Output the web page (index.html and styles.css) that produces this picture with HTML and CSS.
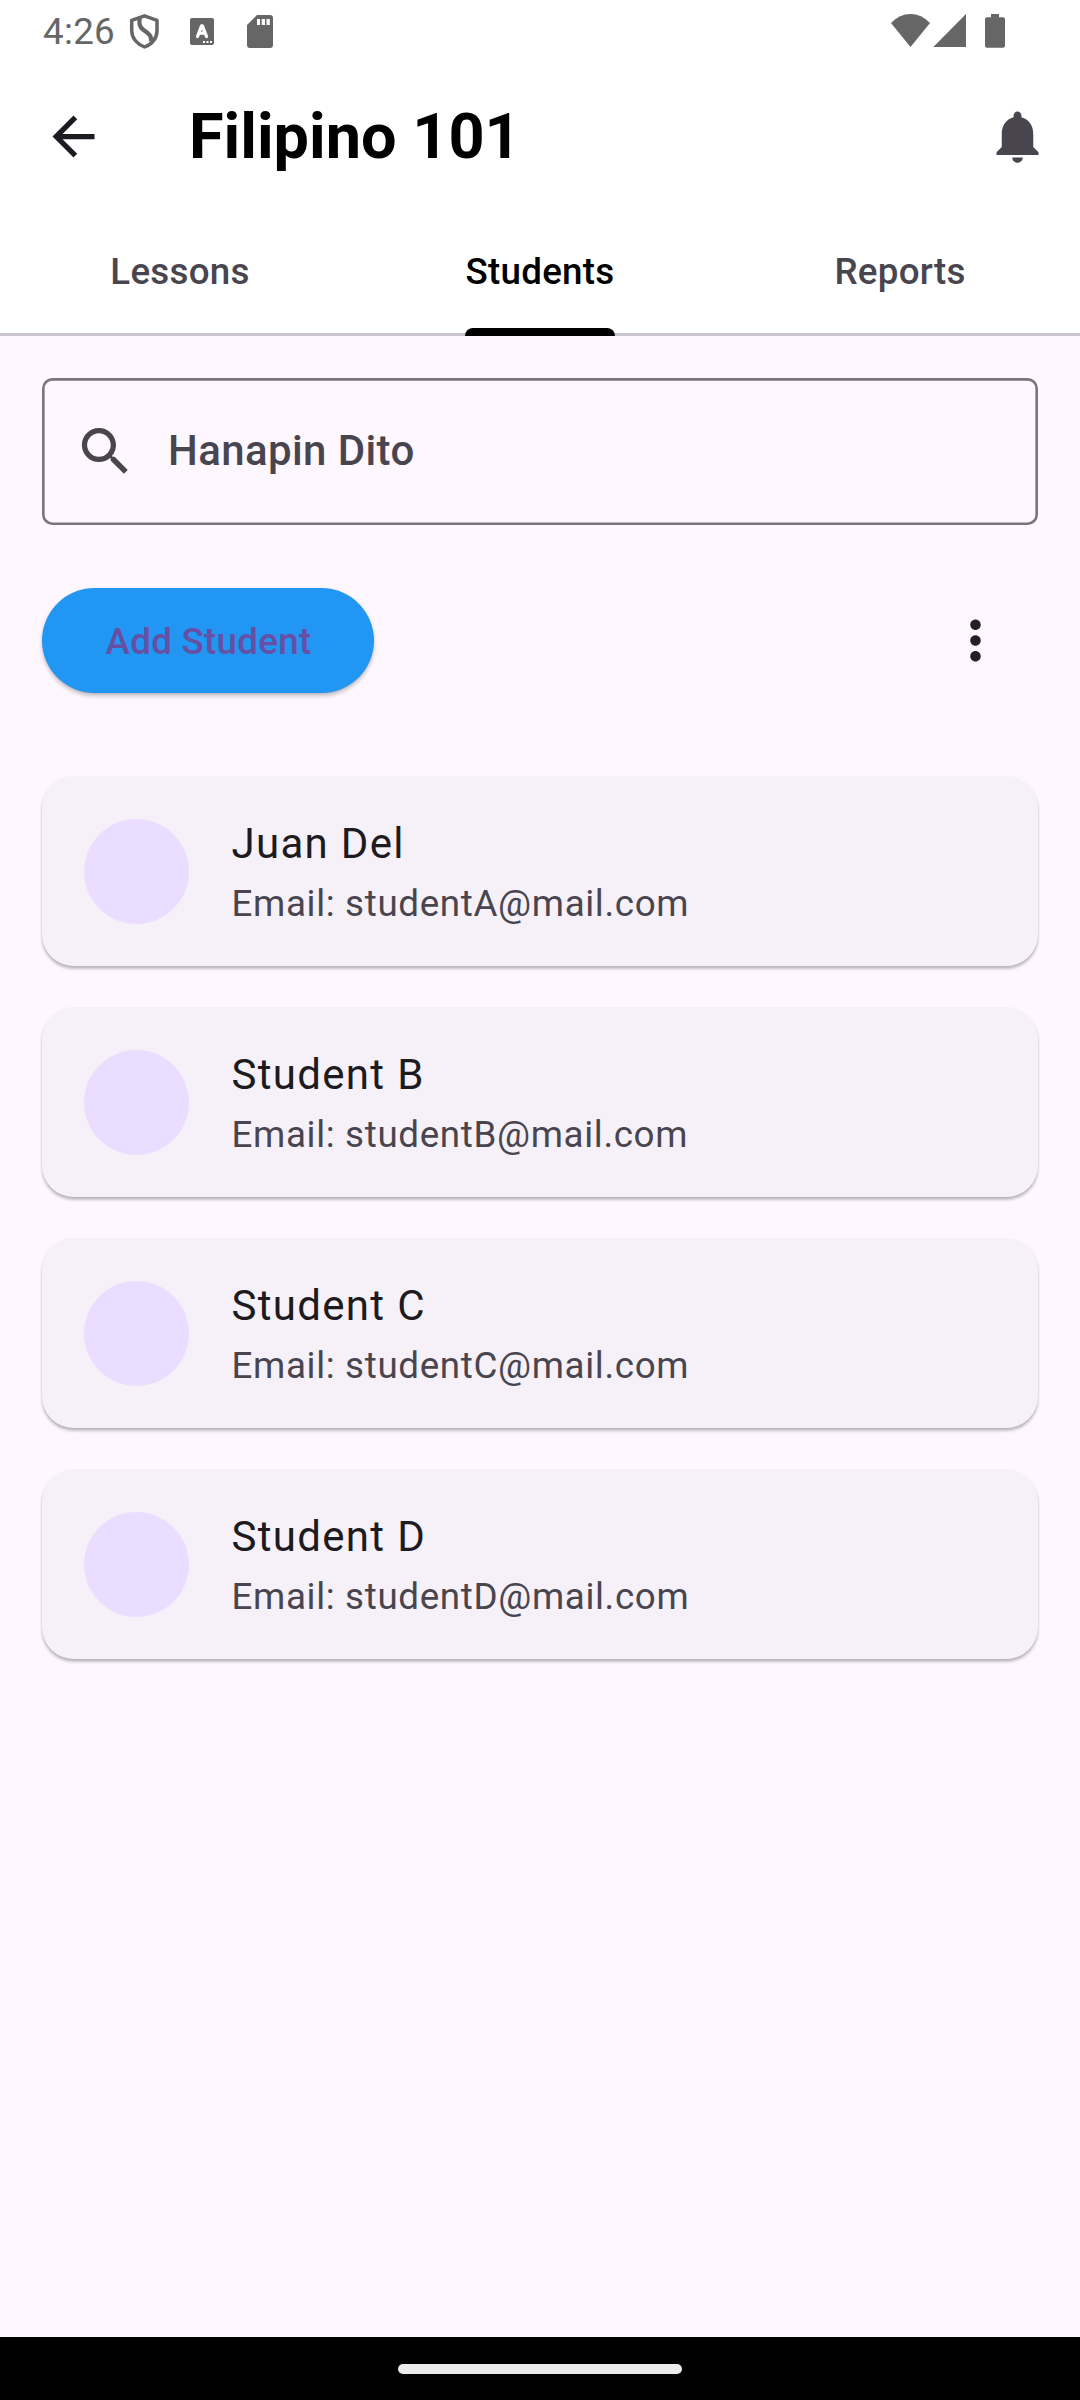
FILE: index.html
```html
<!DOCTYPE html>
<html lang="fil">
<head>
<meta charset="utf-8">
<title>Filipino 101</title>
<link rel="stylesheet" href="styles.css">
</head>
<body>
<div class="screen">
  <div class="status-bar">
    <span class="clock">4:26</span>
    <svg class="status-left" width="150" height="63" viewBox="125 0 150 63" fill="#666">
      <path d="M144.500 15.800L157 20.300V30.500C157 38 152 44 144.500 47C137 44 131.700 38 131.700 30.500V20.300Z" fill="none" stroke="#666" stroke-width="3.500" stroke-linejoin="round"/>
      <path d="M140 17.500C138.500 23 139 26.500 143 29.500C148 33 152 35.500 151 41.500" fill="none" stroke="#666" stroke-width="4.200"/>
      <path fill-rule="evenodd" d="M192 18h20a2 2 0 0 1 2 2v23a2 2 0 0 1-2 2h-20a2 2 0 0 1-2-2v-23a2 2 0 0 1 2-2zM203 41v2h2v-2zM206.500 41v2h2v-2zM210 41v2h2v-2z"/>
      <path d="M197.500 36.500L201.500 26H202.500L206.500 36.500M199.300 33.200H204.700" fill="none" stroke="#fff" stroke-width="3.300" stroke-linecap="round" stroke-linejoin="round"/>
      <path fill-rule="evenodd" d="M257 15h13a3 3 0 0 1 3 3v27a3 3 0 0 1-3 3h-20a3 3 0 0 1-3-3v-20zM257 19v6h3v-6zM261.700 19v6h3.300v-6zM266.500 19v6h3.300v-6z"/>
    </svg>
    <svg class="status-right" width="120" height="63" viewBox="885 0 120 63" fill="#666">
      <path d="M891 23Q899.500 14 910.500 14T930 23L910.500 47Z"/>
      <path d="M966 14V47H933.300Z"/>
      <path d="M991 14h8v3.300h4a2 2 0 0 1 2 2v26.500a2 2 0 0 1-2 2h-16a2 2 0 0 1-2-2v-26.500a2 2 0 0 1 2-2h4z"/>
    </svg>
  </div>
  <header class="app-bar">
    <svg class="icon" viewBox="0 0 24 24" fill="#1d1b20"><path d="M20 11H7.830l5.590-5.590L12 4l-8 8 8 8 1.410-1.410L7.830 13H20v-2z"/></svg>
    <h1 class="title">Filipino 101</h1>
    <svg class="icon" viewBox="0 0 24 24" fill="#49454f"><path d="M12 22c1.100 0 2-.9 2-2h-4c0 1.100.89 2 2 2zm6-6v-5c0-3.070-1.640-5.640-4.500-6.320V4c0-.83-.67-1.500-1.500-1.500s-1.500.67-1.500 1.500v.68C7.630 5.360 6 7.920 6 11v5l-2 2v1h16v-1l-2-2z"/></svg>
  </header>
  <nav class="tabs">
    <div class="tab"><span class="tab-label">Lessons</span></div>
    <div class="tab active"><span class="tab-label">Students</span></div>
    <div class="tab"><span class="tab-label">Reports</span></div>
  </nav>
  <main class="content">
    <div class="search">
      <svg class="icon" viewBox="0 0 24 24" fill="#49454f"><path d="M15.500 14h-.79l-.28-.27C15.410 12.590 16 11.110 16 9.500 16 5.910 13.090 3 9.500 3S3 5.910 3 9.500 5.910 16 9.500 16c1.610 0 3.090-.59 4.230-1.570l.27.28v.79l5 4.990L20.490 19l-4.990-5zm-6 0C7.010 14 5 11.990 5 9.500S7.010 5 9.500 5 14 7.010 14 9.500 11.990 14 9.500 14z"/></svg>
      <span class="search-label">Hanapin Dito</span>
    </div>
    <div class="actions">
      <button class="add">Add Student</button>
      <svg class="icon" viewBox="0 0 24 24" fill="#212121"><path d="M12 8c1.100 0 2-.9 2-2s-.9-2-2-2-2 .9-2 2 .9 2 2 2zm0 2c-1.100 0-2 .9-2 2s.9 2 2 2 2-.9 2-2-.9-2-2-2zm0 6c-1.100 0-2 .9-2 2s.9 2 2 2 2-.9 2-2-.9-2-2-2z"/></svg>
    </div>
    <ul class="students">
      <li class="card"><span class="avatar"></span><div><div class="name">Juan Del</div><div class="email">Email: studentA@mail.com</div></div></li>
      <li class="card"><span class="avatar"></span><div><div class="name">Student B</div><div class="email">Email: studentB@mail.com</div></div></li>
      <li class="card"><span class="avatar"></span><div><div class="name">Student C</div><div class="email">Email: studentC@mail.com</div></div></li>
      <li class="card"><span class="avatar"></span><div><div class="name">Student D</div><div class="email">Email: studentD@mail.com</div></div></li>
    </ul>
  </main>
  <div class="nav-bar"><span class="handle"></span></div>
</div>
</body>
</html>
```

FILE: styles.css
```css
* { box-sizing: border-box; margin: 0; padding: 0; }
body { font-family: Roboto, sans-serif; background: #fef7ff; }
.screen { width: 1080px; height: 2400px; display: flex; flex-direction: column; overflow: hidden; }
.icon { width: 63px; height: 63px; flex: none; }

.status-bar { height: 63px; flex: none; background: #fff; display: flex; padding: 0 75px 0 43px; }
.clock { width: 82px; font-size: 36.75px; line-height: 63px; letter-spacing: .3px; color: #666; }
.status-right { margin-left: auto; }

.app-bar { height: 147px; flex: none; background: #fff; display: flex; align-items: center; padding: 0 31.5px 0 42px; }
.title { flex: 1; margin-left: 84px; margin-right: 21px; font-size: 63px; font-weight: 700; line-height: 80px; color: #000; }

.tabs { height: 126px; flex: none; background: #fff; display: flex; border-bottom: 3px solid #cac4d0; }
.tab { flex: 1; display: flex; justify-content: center; margin-bottom: -3px; }
.tab-label { height: 126px; line-height: 123px; font-size: 36.75px; font-weight: 500; letter-spacing: .2625px; color: #49454f; }
.active .tab-label { position: relative; color: #000; }
.active .tab-label::after { content: ""; position: absolute; left: 0; right: 0; bottom: 0; height: 8px; border-radius: 8px 8px 0 0; background: #000; }

.content { flex: 1; padding: 42px 42px 0; }
.search { height: 147px; border-radius: 10.5px; box-shadow: inset 0 0 0 2.625px #79747e; display: flex; align-items: center; padding-left: 31.5px; }
.search-label { margin-left: 31.5px; margin-bottom: 2px; font-size: 42px; font-weight: 500; line-height: 63px; letter-spacing: .39px; color: #49454f; }
.actions { display: flex; align-items: center; justify-content: space-between; margin-top: 63px; padding-right: 31.5px; }
.add { width: 332px; height: 105px; padding: 2px 0 0 1px; border: 0; border-radius: 52.5px; background: #2196f3; color: #6750a4; font: 500 36.75px/52px Roboto, sans-serif; letter-spacing: .2625px; box-shadow: 0 3px 4px rgba(0,0,0,.22), 0 1px 2px rgba(0,0,0,.08); }
.students { list-style: none; margin-top: 83px; display: flex; flex-direction: column; gap: 41px; }
.card { height: 190px; border-radius: 31.5px; background: #f6f1f9; display: flex; align-items: center; gap: 42px; padding: 1px 0 0 42px; box-shadow: 0 3px 3px rgba(0,0,0,.24), 0 1px 2px rgba(0,0,0,.06); }
.avatar { width: 105px; height: 105px; border-radius: 50%; background: #eaddff; }
.name { margin: 0 0 3px .5px; font-size: 42px; line-height: 62px; letter-spacing: 1.3125px; color: #1d1b20; }
.email { margin-left: .5px; font-size: 36.75px; line-height: 52px; letter-spacing: .656px; color: #49454f; }

.nav-bar { height: 63px; flex: none; background: #000; display: flex; justify-content: center; padding-top: 27px; }
.handle { width: 284px; height: 10px; border-radius: 5px; background: #ebebeb; }
```
